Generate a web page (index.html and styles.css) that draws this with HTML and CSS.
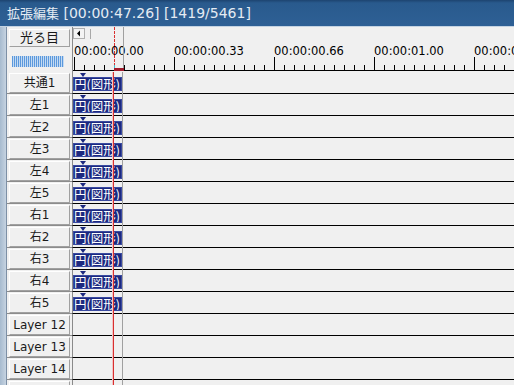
FILE: index.html
```html
<!DOCTYPE html>
<html lang="ja">
<head>
  <meta charset="UTF-8" />
  <title>拡張編集</title>
  <link rel="stylesheet" href="styles.css">
</head>
<body>
  <div class="titlebar"><span class="title-jp">拡張編集</span> [00:00:47.26] [1419/5461]</div>
  <div class="frame">
    <div class="edge"></div>
    <div class="client">
      <div class="head">
        <div class="head-label">
          <div class="btn">光る目</div>
          <div class="meter"></div>
        </div>
        <svg class="ruler" width="442" height="45">
          <defs>
            <pattern id="minor" x="1" y="0" width="10" height="45" patternUnits="userSpaceOnUse">
              <rect x="0" y="38" width="1" height="5" fill="#000" />
            </pattern>
            <pattern id="major" x="1" y="0" width="100" height="45" patternUnits="userSpaceOnUse">
              <rect x="0" y="30" width="1" height="13" fill="#000" />
            </pattern>
          </defs>
          <!-- scroll arrow -->
          <rect x="0.5" y="1.5" width="11" height="10" fill="#f4f4f4" stroke="#b0b0b0" />
          <path d="M4 6.5 L7 3.5 L7 9.5 Z" fill="#000" />
          <rect x="17" y="2" width="1" height="10" fill="#a8a8a8" />
          <g class="times">
            <text x="1" y="28">00:00:00.00</text>
            <text x="101" y="28">00:00:00.33</text>
            <text x="201" y="28">00:00:00.66</text>
            <text x="301" y="28">00:00:01.00</text>
            <text x="401" y="28">00:00:01.33</text>
          </g>
          <rect x="0" y="0" width="442" height="45" fill="url(#minor)" />
          <rect x="0" y="0" width="442" height="45" fill="url(#major)" />
          <rect x="0" y="43" width="442" height="1" fill="#000" />
          <!-- playhead -->
          <rect x="50" y="0" width="1" height="43" fill="#a0a0a0" />
          <line x1="41.5" y1="0" x2="41.5" y2="38" stroke="#d83030" stroke-dasharray="3 1" />
          <rect x="41" y="38" width="1" height="3" fill="#3cc0d0" />
          <rect x="41" y="41" width="10" height="3" fill="#a01c2c" />
        </svg>
      </div>

      <div class="row"><div class="label"><div class="btn">共通1</div></div><div class="track"><i class="mark"></i><div class="clip">円(図形)</div></div></div>
      <div class="row"><div class="label"><div class="btn">左1</div></div><div class="track"><i class="mark"></i><div class="clip">円(図形)</div></div></div>
      <div class="row"><div class="label"><div class="btn">左2</div></div><div class="track"><i class="mark"></i><div class="clip">円(図形)</div></div></div>
      <div class="row"><div class="label"><div class="btn">左3</div></div><div class="track"><i class="mark"></i><div class="clip">円(図形)</div></div></div>
      <div class="row"><div class="label"><div class="btn">左4</div></div><div class="track"><i class="mark"></i><div class="clip">円(図形)</div></div></div>
      <div class="row"><div class="label"><div class="btn">左5</div></div><div class="track"><i class="mark"></i><div class="clip">円(図形)</div></div></div>
      <div class="row"><div class="label"><div class="btn">右1</div></div><div class="track"><i class="mark"></i><div class="clip">円(図形)</div></div></div>
      <div class="row"><div class="label"><div class="btn">右2</div></div><div class="track"><i class="mark"></i><div class="clip">円(図形)</div></div></div>
      <div class="row"><div class="label"><div class="btn">右3</div></div><div class="track"><i class="mark"></i><div class="clip">円(図形)</div></div></div>
      <div class="row"><div class="label"><div class="btn">右4</div></div><div class="track"><i class="mark"></i><div class="clip">円(図形)</div></div></div>
      <div class="row"><div class="label"><div class="btn">右5</div></div><div class="track"><i class="mark"></i><div class="clip">円(図形)</div></div></div>
      <div class="row"><div class="label"><div class="btn">Layer 12</div></div><div class="track"></div></div>
      <div class="row"><div class="label"><div class="btn">Layer 13</div></div><div class="track"></div></div>
      <div class="row"><div class="label"><div class="btn">Layer 14</div></div><div class="track"></div></div>
      <div class="row"><div class="label"><div class="btn">Layer 15</div></div><div class="track"></div></div>

      <div class="endline"></div>
      <div class="playhead"></div>
    </div>
  </div>
</body>
</html>
```

FILE: styles.css
```css
body {
  margin: 0;
  width: 514px;
  height: 385px;
  overflow: hidden;
  background-color: #f0f0f0;
  font-family: "DejaVu Sans", "Noto Sans CJK JP", sans-serif;
}

.titlebar {
  height: 27px;
  box-sizing: border-box;
  padding: 3px 0 0 7px;
  font-size: 14px;
  color: #e4ebf3;
  background: linear-gradient(#1d4470 0, #295a8d 3px, #2e6095 100%);
  border-bottom: 1px solid #c4d3e2;
  white-space: nowrap;
}

.title-jp {
  font-size: 13px;
}

.frame {
  display: flex;
  height: 358px;
}

.edge {
  width: 6px;
  background: linear-gradient(to right, #a7bbcf, #c6d3e1);
  border-right: 1px solid #7d90a6;
}

.client {
  flex: 1;
  position: relative;
  overflow: hidden;
}

.head {
  display: flex;
  height: 45px;
}

.head-label {
  width: 65px;
  padding: 2px 2px 0 2px;
  box-sizing: border-box;
}

.btn {
  height: 20px;
  box-sizing: border-box;
  border: 1px solid;
  border-color: #ffffff #a0a0a0 #a0a0a0 #ffffff;
  background-color: #f0f0f0;
  color: #1a1a1a;
  font-size: 12px;
  text-align: center;
  line-height: 18px;
  white-space: nowrap;
}

.head-label .btn {
  height: 18px;
  line-height: 16px;
  font-size: 13px;
}

.meter {
  margin: 9px 0 0 3px;
  width: 52px;
  height: 11px;
  background: repeating-linear-gradient(to right, #5b98dc 0, #5b98dc 1px, #c3daf2 1px, #c3daf2 2px);
}

.ruler {
  display: block;
  border-left: 1px solid #8a8a8a;
}

.times text {
  font-family: "DejaVu Sans", sans-serif;
  font-size: 11.5px;
  fill: #000;
}

.row {
  display: flex;
  height: 22px;
}

.label {
  width: 65px;
  padding: 1px 2px 0 2px;
  box-sizing: border-box;
  border-bottom: 1px solid #8c8c8c;
}

.track {
  flex: 1;
  display: flex;
  flex-direction: column;
  padding-top: 1px;
  border-left: 1px solid #8a8a8a;
  border-bottom: 1px solid #000;
}

.mark {
  width: 0;
  height: 0;
  margin-left: 7px;
  border-left: 3px solid transparent;
  border-right: 3px solid transparent;
  border-top: 4px solid #1c2980;
}

.clip {
  width: 49px;
  height: 14px;
  box-sizing: border-box;
  background-color: #1c2980;
  border: 1px solid #3a4aa0;
  color: #ffffff;
  font-family: "Noto Sans CJK JP", sans-serif;
  font-size: 12.5px;
  line-height: 12px;
  white-space: nowrap;
  overflow: hidden;
}

.endline {
  position: absolute;
  left: 115px;
  top: 45px;
  bottom: 0;
  width: 1px;
  background-color: #a0a0a0;
}

.playhead {
  position: absolute;
  left: 106px;
  top: 45px;
  bottom: 0;
  width: 1px;
  background-color: #d83030;
  box-shadow: -1px 0 #f3c4c4;
}
```
